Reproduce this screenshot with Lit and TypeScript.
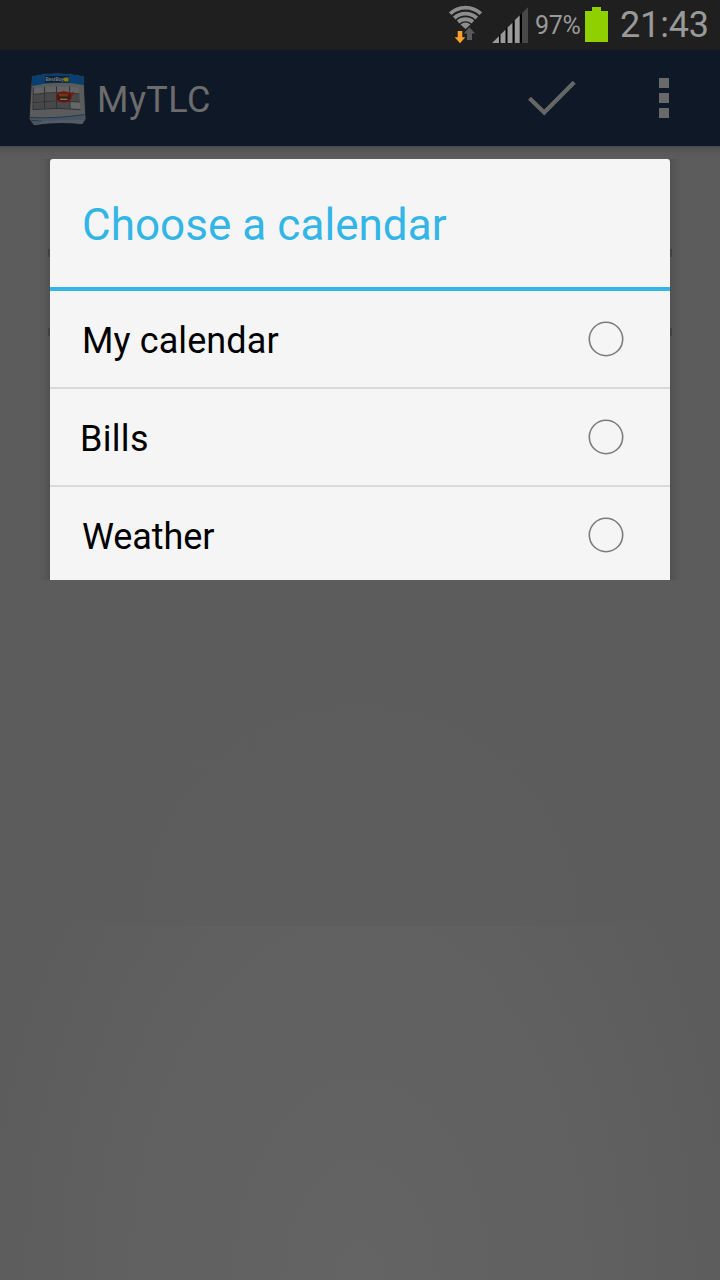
import { LitElement, html, css } from "lit";
import { customElement, property } from "lit/decorators.js";

@customElement("status-bar")
class StatusBar extends LitElement {
  static styles = css`
    :host { display: flex; height: 50px; background: #1f1f1f; color: #999; justify-content: flex-end; align-items: flex-start; padding-right: 10px; box-sizing: border-box; }
    svg { display: block; flex: none; }
    .wifi { margin-right: 9px; }
    .signal { margin-right: 7px; }
    .pct { font-size: 25px; line-height: 50px; width: 49px; margin-top: 1px; white-space: nowrap; letter-spacing: -0.3px; }
    .battery { margin-right: 12px; }
    .time { font-size: 36px; line-height: 50px; width: 90px; white-space: nowrap; letter-spacing: -0.15px; }
  `;
  render() {
    return html`
      <svg class="wifi" width="36" height="50" viewBox="447 0 36 50">
        <g fill="none" stroke="#8d8d8d" stroke-width="3.9">
          <path d="M450.200 13.700A22.300 22.300 0 0 1 480.800 13.700" />
          <path d="M454.200 18A16.800 16.800 0 0 1 476.800 18" />
          <path d="M458.100 22A11.300 11.300 0 0 1 472.900 22" />
        </g>
        <path d="M460.500 24.400q5-3.600 10 0l-5 4.600z" fill="#8d8d8d" />
        <path d="M457.700 31h4.600v6.300h3l-5.300 6-5.300-6h3z" fill="#fd9f2c" />
        <path d="M467 40v-6.500h-3.200l5.600-6.200 5.700 6.200H472V40z" fill="#5b5b5b" />
      </svg>
      <svg class="signal" width="36" height="50" viewBox="492 0 36 50">
        <path d="M492 43L528 7V43z" fill="#000" />
        <path d="M492 43l7-7v7zM500.500 34.500l5-5V43h-5zM507.500 27.500l5-5V43h-5zM514.700 20.300l5-5V43h-5z" fill="#9a9a9a" />
        <path d="M522 13l6-6v36h-6z" fill="#484848" />
      </svg>
      <span class="pct">97%</span>
      <svg class="battery" width="24" height="50" viewBox="584 0 24 50">
        <path d="M585 11h7V7h9v4h7v31h-23z" fill="#90d000" />
      </svg>
      <span class="time">21:43</span>
    `;
  }
}

@customElement("action-bar")
class ActionBar extends LitElement {
  static styles = css`
    :host { display: flex; height: 96px; background: #0f1826; align-items: stretch; padding-left: 28px; box-sizing: border-box; }
    svg { display: block; flex: none; }
    .title { flex: 1; font-size: 36px; line-height: 100px; color: #6c6c6c; padding-left: 9px; letter-spacing: 0.45px; }
    .mark { font: bold 6px "Liberation Sans", sans-serif; }
  `;
  render() {
    return html`
      <svg width="60" height="96" viewBox="28 50 60 96">
        <path d="M31.500 76Q57 70 84 76L86 119 82.500 124.500Q57 122 34 125.500L29 119z" fill="#595b5d" stroke="#191b1e" stroke-width="1.200" />
        <path d="M32 76.500Q57 70.500 83.500 76.500L84 85Q57 80 32 86z" fill="#083e70" />
        <path d="M45 76h24v6.500H45z" fill="#10202f" />
        <text class="mark" x="45.500" y="81.300" textLength="18.500" lengthAdjust="spacingAndGlyphs" fill="#76838e">BestBuy</text>
        <path d="M64.500 77.500h4v4h-4l-1-2z" fill="#817a18" />
        <path d="M34 88.500L44 87.200V92.500L34 94zM45 87.200L56 86.500v5.800L45 92.500zM57 86.500h12l.2 6H57zM70 87l9 .8.300 5.700L70 92.600z" fill="#636363" />
        <path d="M34 95l10-1.300V101l-10.300 1zM45 93.700l11-.4v7.200l-11 .5zM57 93.300h12.300v7.200H57zM70.300 93.600l9 .8.500 7-9.500-.8z" fill="#484848" />
        <path d="M33.500 103l10.500-1v6.500l-11 .9zM45 102l11-.5v6.700l-11 .3zM57 101.500h12.500v6.700H57z" fill="#484848" />
        <path d="M70.500 101.600l9.500.8.500 6.800-10-1z" fill="#656768" />
        <path d="M33.300 87.500L33 110M44.500 87v22M56.500 86.500v22M69.600 86.500l.4 22.200M33.500 94.500Q56 91 79.500 94M33.500 102.500Q56 99.500 80 102M33 109.700Q57 107 80.500 109.600" fill="none" stroke="#303234" />
        <path d="M29.500 117Q49 119 85 114.500L85.500 119 82.500 124Q57 121.500 34 125z" fill="#465561" />
        <path d="M30 117.500Q55 119 84.500 114.500M32 120.500l10 .8M31.500 123l8 .3" fill="none" stroke="#1d3045" stroke-width=".8" />
        <path d="M34 125Q51 121 82 123.500L84 120Q55 120 31.500 122z" fill="#5d666c" opacity=".5" />
        <ellipse cx="63.800" cy="97" rx="7.300" ry="5" fill="#30200f" stroke="#850d14" stroke-width="1.400" />
        <path d="M68.500 94.500l4.300-1.500-1.500 3.500" fill="none" stroke="#850d14" stroke-width="1.300" />
        <path d="M59.500 93.500h8l1 3h-10z" fill="#6b3a14" />
        <path d="M59.500 98.600l8.500.2-1 1.100h-6.500z" fill="#777" />
      </svg>
      <span class="title">MyTLC</span>
      <svg width="192" height="96" viewBox="528 50 192 96">
        <path d="M529.500 98.200L544.200 112.500 574.200 82.200" fill="none" stroke="#666" stroke-width="4.200" />
        <path d="M659 78h10v10h-10zM659 93h10v10h-10zM659 108h10v10h-10z" fill="#696969" />
      </svg>
    `;
  }
}

@customElement("calendar-dialog")
class CalendarDialog extends LitElement {
  @property({ type: Array }) options = ["My calendar", "Bills", "Weather"];
  static styles = css`
    :host { display: flex; flex-direction: column; height: 421px; overflow: hidden; background: #f5f5f5; border-radius: 3px 3px 0 0; }
    .title { height: 128px; flex: none; border-bottom: 4px solid #33b5e5; color: #33b5e5; font-size: 44px; line-height: 133px; padding-left: 32px; letter-spacing: 0.05px; }
    .row { height: 96px; flex: none; border-bottom: 2px solid #dadada; display: flex; align-items: center; justify-content: space-between; padding: 0 45px 0 32px; color: #000; font-size: 36px; line-height: 96px; letter-spacing: 0.1px; }
    .row:nth-child(3) { padding-left: 30px; letter-spacing: 0.3px; }
    .row:nth-child(4) { letter-spacing: -0.1px; }
    .label { padding-top: 4px; }
    svg { display: block; }
  `;
  render() {
    return html`
      <div class="title"><span>Choose a calendar</span></div>
      ${this.options.map((o) => html`
        <div class="row">
          <span class="label">${o}</span>
          <svg width="38" height="38" viewBox="0 0 38 38"><circle cx="19" cy="19" r="16.700" fill="none" stroke="#7c7c7c" stroke-width="1.600" /></svg>
        </div>`)}
    `;
  }
}

@customElement("app-root")
class AppRoot extends LitElement {
  static styles = css`
    :host { display: flex; flex-direction: column; width: 720px; height: 1280px; overflow: hidden; font-family: Roboto, sans-serif; background: #5c5c5c; }
    status-bar, action-bar { flex: none; }
    .content { flex: 1; display: flex; flex-direction: column; background: linear-gradient(#484848 0, #525252 2px, #595959 7px, #5b5b5b 12px, #5c5c5c 30px); padding-top: 13px; }
    .stage { height: 421px; flex: none; display: grid; grid-template-columns: 50px 620px 50px; }
    .side { background: linear-gradient(to left, #515151, #575757 5px, #5c5c5c 12px); display: flex; flex-direction: column; align-items: flex-end; padding-top: 90px; gap: 71px; }
    .side.right { background: linear-gradient(to right, #515151, #575757 5px, #5c5c5c 12px); align-items: flex-start; }
    .tick { width: 2px; height: 8px; background: #424242; }
    .upper { height: 345px; flex: none; background: radial-gradient(ellipse 500px 500px at 50% 100%, #5d5d5d, #5c5c5c); }
    .lower { flex: 1; background: radial-gradient(ellipse 390px 620px at 50% 100%, #646464, #606060 60%, #5c5c5c); }
  `;
  render() {
    return html`
      <status-bar></status-bar>
      <action-bar></action-bar>
      <div class="content">
        <div class="stage">
          <div class="side"><div class="tick"></div><div class="tick"></div></div>
          <calendar-dialog></calendar-dialog>
          <div class="side right"><div class="tick"></div><div class="tick"></div></div>
        </div>
        <div class="upper"></div>
        <div class="lower"></div>
      </div>
    `;
  }
}
